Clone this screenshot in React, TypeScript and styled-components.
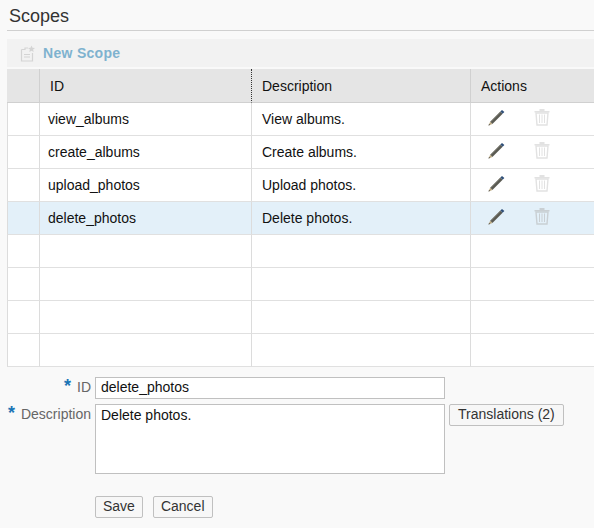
import React from "react";
import styled, { createGlobalStyle } from "styled-components";

const Global = createGlobalStyle`
  html, body { margin: 0; padding: 0; background: #f9f9f9; overflow: hidden; }
  body { font-family: "Liberation Sans", Arial, sans-serif; color: #000; width: 594px; height: 528px; }
`;

const Page = styled.div`
  width: 594px;
  height: 528px;
  padding-left: 7px;
  box-sizing: border-box;
  overflow: hidden;
`;

const Title = styled.h1`
  margin: 0;
  padding: 6px 0 0 2px;
  height: 24px;
  font-size: 18px;
  line-height: 21px;
  font-weight: 400;
  color: #333;
  border-bottom: 1px solid #d0d0d0;
`;

const Toolbar = styled.div`
  margin-top: 8px;
  height: 28px;
  background: #f2f2f2;
  display: flex;
  align-items: center;
  padding-left: 13px;
  gap: 7px;
`;

const ToolLabel = styled.span`
  font-size: 14px;
  font-weight: 700;
  color: #7fb2cf;
  letter-spacing: 0.3px;
`;

const Table = styled.div`
  margin-top: 2px;
  display: grid;
  grid-template-columns: 33px 212px 219px 123px;
`;

const HeadCell = styled.div<{ $dotted?: boolean; $last?: boolean }>`
  height: 34px;
  box-sizing: border-box;
  background: #e5e5e5;
  border-bottom: 1px solid #d0d0d0;
  border-right: ${(p) => (p.$last ? "none" : p.$dotted ? "1px dotted #333" : "1px solid #d0d0d0")};
  font-size: 14px;
  line-height: 34px;
  padding-left: 10px;
  color: #111;
`;

const Cell = styled.div<{ $selected?: boolean; $last?: boolean; $first?: boolean; $pad?: number }>`
  height: 33px;
  box-sizing: border-box;
  background: ${(p) => (p.$selected ? "#e3f0f9" : "#fff")};
  border-bottom: 1px solid #e0e0e0;
  border-left: ${(p) => (p.$first ? "1px solid #dcdcdc" : "none")};
  border-right: ${(p) => (p.$last ? "none" : "1px solid #dcdcdc")};
  font-size: 14px;
  line-height: 32px;
  padding-left: ${(p) => p.$pad ?? 8}px;
  color: #111;
`;

const ActionCell = styled(Cell)`
  display: flex;
  align-items: flex-start;
  padding: 5px 0 0 16px;
  gap: 27px;
`;

const Form = styled.div`
  margin-top: 10px;
  display: grid;
  grid-template-columns: 84px 350px auto;
  column-gap: 4px;
  row-gap: 5px;
  align-items: start;
`;

const Label = styled.label`
  font-size: 14px;
  color: #666;
  line-height: 21px;
  text-align: right;
  white-space: nowrap;
`;

const Star = styled.span`
  color: #1b75b5;
  font-weight: 700;
  font-size: 18px;
  line-height: 14px;
  margin-right: 6px;
`;

const TextInput = styled.input`
  width: 350px;
  height: 22px;
  box-sizing: border-box;
  border: 1px solid #c0c0c0;
  background: #fff;
  padding: 0 5px 2px;
  margin: 0;
  font: 14px "Liberation Sans", Arial, sans-serif;
  color: #111;
  outline: none;
`;

const TextArea = styled.textarea`
  width: 350px;
  height: 70px;
  box-sizing: border-box;
  border: 1px solid #c0c0c0;
  background: #fff;
  padding: 2px 5px;
  margin: 0;
  font: 14px/16px "Liberation Sans", Arial, sans-serif;
  color: #111;
  resize: none;
  outline: none;
  display: block;
`;

const Button = styled.button<{ $wide?: boolean }>`
  height: 22px;
  box-sizing: border-box;
  border: 1px solid #c0c0c0;
  border-radius: 2px;
  background: #f7f7f7;
  padding: 0 ${(p) => (p.$wide ? 8 : 7)}px 2px;
  margin: 0;
  font: 14px "Liberation Sans", Arial, sans-serif;
  color: #333;
  justify-self: start;
`;

const Actions = styled.div`
  grid-column: 2 / 4;
  display: flex;
  gap: 10px;
  margin-top: 17px;
`;

const Pencil = () => (
  <svg width="20" height="20" viewBox="0 0 20 20">
    <path d="M3.2 13.8 L13.4 3.6 L15.6 5.8 L5.4 16 Z" fill="#5a5a52" />
    <path d="M3.2 13.8 L5.4 16 L1.5 17.5 Z" fill="#b9a77f" />
    <path d="M1.5 17.5 L2 16 L3 17 Z" fill="#333" />
    <path d="M13.4 3.6 L15 2 L17.4 4 L15.6 5.8 Z" fill="#2f4f78" />
    <path d="M3.8 13.8 L13.6 4" stroke="#8a8a80" strokeWidth="0.7" fill="none" />
  </svg>
);

const Trash = ({ selected }: { selected?: boolean }) => {
  const c = selected ? "#c9cfd3" : "#e2e2e2";
  return (
    <svg width="16" height="18" viewBox="0 0 16 18">
      <path d="M0.5 3 H15.5 V4.5 H0.5 Z M5.5 1 H10.5 V3 H5.5 Z" fill={c} />
      <path d="M2 5 H14 L13 17 H3 Z" fill="none" stroke={c} strokeWidth="1.4" />
      <path d="M5.5 6.5 V15 M8 6.5 V15 M10.5 6.5 V15" stroke={c} strokeWidth="1" />
    </svg>
  );
};

const NewIcon = () => (
  <svg width="16" height="17" viewBox="0 0 16 17">
    <path d="M1.5 4.5 H5 V3 H8 M12.5 8 V16 H1.5 V4.5" fill="none" stroke="#d4d4d4" strokeWidth="1.2" />
    <path d="M4 9.5 H10 M4 12 H10" stroke="#d4d4d4" strokeWidth="1.2" />
    <path d="M11.5 0.5 L12.5 2.8 L15 3 L13.1 4.6 L13.7 7 L11.5 5.7 L9.3 7 L9.9 4.6 L8 3 L10.5 2.8 Z" fill="#d4d4d4" />
  </svg>
);

const rows = [
  ["view_albums", "View albums."],
  ["create_albums", "Create albums."],
  ["upload_photos", "Upload photos."],
  ["delete_photos", "Delete photos."],
  ["", ""],
  ["", ""],
  ["", ""],
  ["", ""],
];

export default function App() {
  return (
    <Page>
      <Global />
      <Title>Scopes</Title>
      <Toolbar>
        <NewIcon />
        <ToolLabel>New Scope</ToolLabel>
      </Toolbar>
      <Table>
        <HeadCell />
        <HeadCell $dotted>ID</HeadCell>
        <HeadCell>Description</HeadCell>
        <HeadCell $last>Actions</HeadCell>
        {rows.map(([id, desc], i) => {
          const selected = i === 3;
          return (
            <React.Fragment key={i}>
              <Cell $selected={selected} $first />
              <Cell $selected={selected}>{id}</Cell>
              <Cell $selected={selected} $pad={10}>{desc}</Cell>
              {id ? (
                <ActionCell $selected={selected} $last>
                  <Pencil />
                  <Trash selected={selected} />
                </ActionCell>
              ) : (
                <Cell $last />
              )}
            </React.Fragment>
          );
        })}
      </Table>
      <Form>
        <Label><Star>*</Star>ID</Label>
        <TextInput defaultValue="delete_photos" />
        <span />
        <Label><Star>*</Star>Description</Label>
        <TextArea defaultValue="Delete photos." />
        <Button $wide>Translations (2)</Button>
        <Actions>
          <Button>Save</Button>
          <Button>Cancel</Button>
        </Actions>
      </Form>
    </Page>
  );
}
